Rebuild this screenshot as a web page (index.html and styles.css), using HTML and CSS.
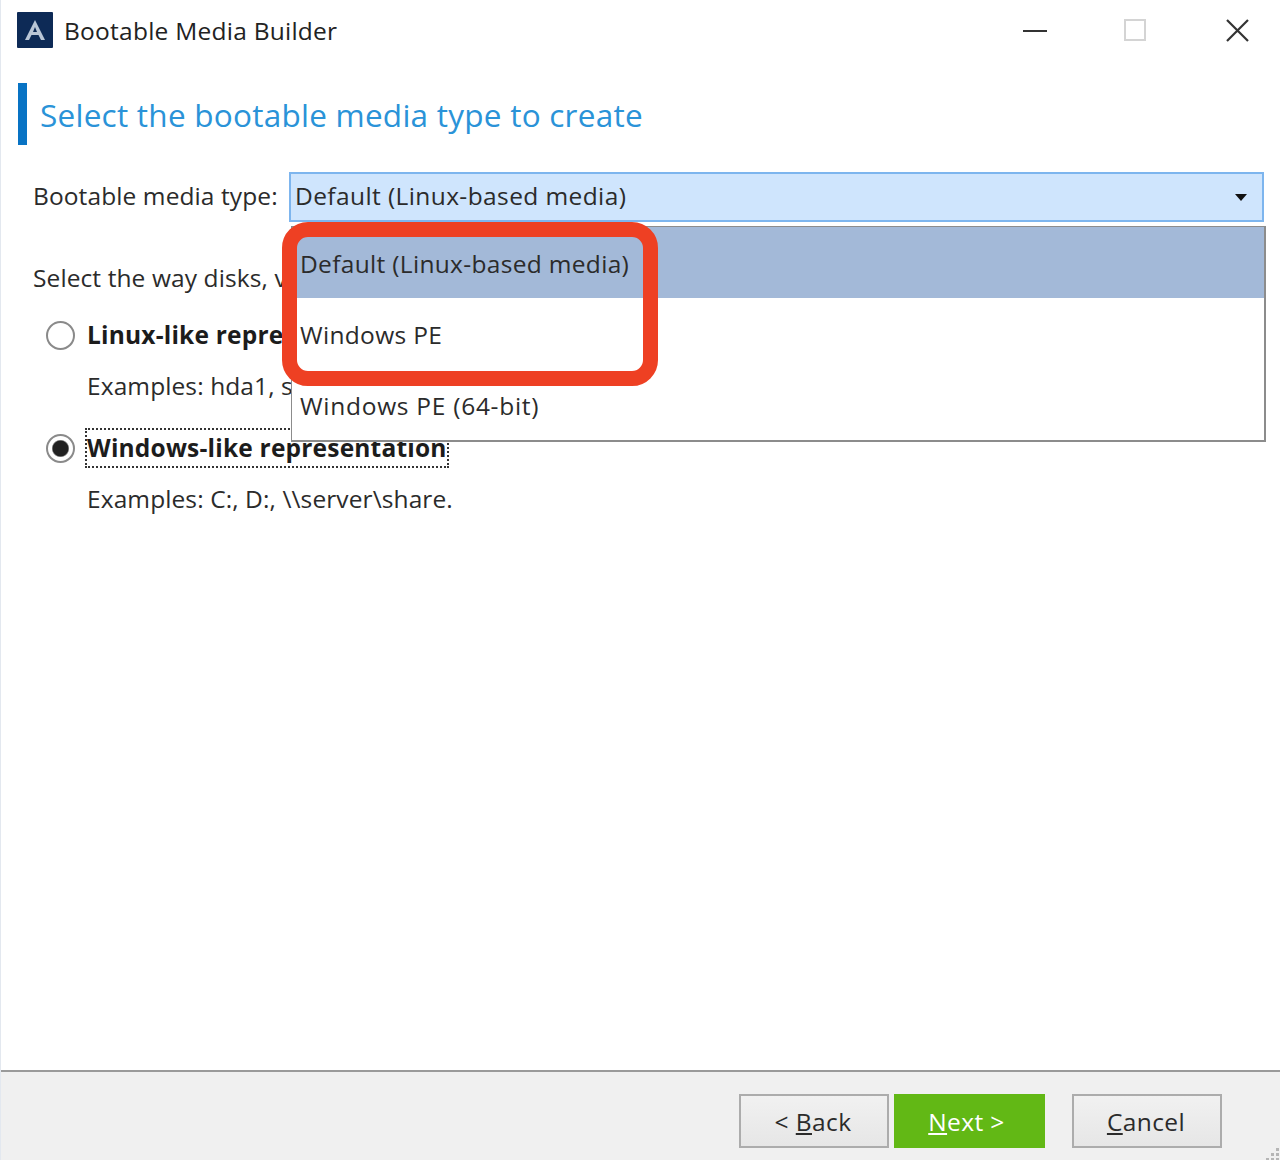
FILE: index.html
```html
<!DOCTYPE html>
<html lang="en">
<head>
<meta charset="utf-8">
<title>Bootable Media Builder</title>
<link rel="stylesheet" href="styles.css">
</head>
<body>
<div class="window">
  <header class="titlebar">
    <div class="title-left">
      <svg class="logo" width="36" height="36" viewBox="0 0 36 36"><rect width="36" height="36" rx="1" fill="#0d2a56"/><path d="M18 8 L8 28 H12 L14.5 23 H21.5 L24 28 H28 Z M16 20 L18 15 L20 20 Z" fill="#b9c6d6"/></svg>
      <span class="app-name">Bootable Media Builder</span>
    </div>
    <div class="win-controls">
      <svg class="ctl ctl-min" width="24" height="4" viewBox="0 0 24 4"><rect y="1" width="24" height="2" fill="#333"/></svg>
      <svg class="ctl ctl-max" width="22" height="22" viewBox="0 0 22 22"><rect x="1" y="1" width="20" height="20" fill="none" stroke="#d4d4d4" stroke-width="2"/></svg>
      <svg class="ctl ctl-close" width="25" height="25" viewBox="0 0 25 25"><path d="M2 2 L23 23 M23 2 L2 23" stroke="#333" stroke-width="2.2" fill="none"/></svg>
    </div>
  </header>

  <main class="content">
    <h1 class="heading">Select the bootable media type to create</h1>

    <div class="type-row">
      <span class="type-label">Bootable media type:</span>
      <div class="combo">
        <span class="combo-text">Default (Linux-based media)</span>
        <svg width="12" height="7" viewBox="0 0 12 7"><path d="M0 0 H12 L6 7 Z" fill="#111"/></svg>
      </div>
    </div>

    <p class="prompt">Select the way disks, volumes and network shares will be displayed:</p>

    <div class="option">
      <span class="radio"></span>
      <span class="option-label">Linux-like representation</span>
    </div>
    <p class="example">Examples: hda1, sdb2, md1.</p>

    <div class="option option-second">
      <span class="radio radio-on"></span>
      <span class="option-label focused">Windows-like representation</span>
    </div>
    <p class="example">Examples: C:, D:, \\server\share.</p>

    <ul class="dropdown">
      <li class="item item-selected">Default (Linux-based media)</li>
      <li class="item">Windows PE</li>
      <li class="item item-wide">Windows PE (64-bit)</li>
    </ul>
    <div class="callout"></div>
  </main>

  <footer class="footer">
    <button class="btn"><span>&lt; <u>B</u>ack</span></button>
    <button class="btn btn-next"><span><u>N</u>ext &gt;</span></button>
    <button class="btn btn-cancel"><span><u>C</u>ancel</span></button>
    <svg class="grip" width="18" height="14" viewBox="0 0 18 14"><g fill="#b5b5b5"><rect x="14" y="2" width="3" height="3"/><rect x="9" y="7" width="3" height="3"/><rect x="14" y="7" width="3" height="3"/><rect x="4" y="12" width="3" height="2"/><rect x="9" y="12" width="3" height="2"/><rect x="14" y="12" width="3" height="2"/></g></svg>
  </footer>
</div>
</body>
</html>
```

FILE: styles.css
```css
* { box-sizing: border-box; }
html, body { margin: 0; padding: 0; }
body {
  width: 1280px;
  height: 1160px;
  overflow: hidden;
  background: #fff;
  font-family: "Open Sans", "Noto Sans", sans-serif;
  color: #2b2b2b;
}
.window {
  width: 1280px;
  height: 1160px;
  display: flex;
  flex-direction: column;
  border-left: 1px solid #e3e8ef;
}
.titlebar {
  height: 62px;
  flex: none;
  display: flex;
  justify-content: space-between;
  align-items: center;
  padding: 0 30px 0 16px;
}
.title-left { display: flex; align-items: center; gap: 11px; }
.logo { display: block; margin-top: -2px; }
.app-name { font-size: 24.5px; letter-spacing: 0.25px; color: #222; padding-bottom: 2px; }
.win-controls { display: flex; align-items: center; }
.ctl { display: block; }
.ctl-max { margin-left: 77px; margin-bottom: 2px; }
.ctl-close { margin-left: 79px; margin-bottom: 2px; }

.content { flex: 1; position: relative; padding: 21px 0 0 17px; min-height: 0; }
.heading {
  margin: 0;
  height: 62px;
  border-left: 9px solid #0873c4;
  padding-left: 13px;
  font-size: 31.5px;
  font-weight: 400;
  line-height: 64px;
  letter-spacing: 0.25px;
  color: #2a93d8;
}
.type-row {
  display: flex;
  align-items: center;
  margin-top: 27px;
  height: 50px;
}
.type-label { font-size: 24.5px; letter-spacing: 0.1px; margin-left: 15px; width: 256px; flex: none; padding-bottom: 4px; }
.combo {
  width: 975px;
  height: 50px;
  flex: none;
  background: #cfe5fd;
  border: 2px solid #7db5ee;
  display: flex;
  justify-content: space-between;
  align-items: center;
  padding: 0 15px 0 4px;
  font-size: 24.5px;
  letter-spacing: 0.4px;
}
.combo-text { padding-bottom: 4px; }
.prompt {
  margin: 39px 0 0 15px;
  font-size: 24.5px;
  letter-spacing: 0.1px;
  line-height: 34px;
  white-space: nowrap;
}
.option { display: flex; align-items: center; margin: 23px 0 0 28px; height: 34px; gap: 11px; }
.option-second { margin-top: 28px; }
.radio {
  width: 29px;
  height: 29px;
  flex: none;
  border-radius: 50%;
  border: 2px solid #8a8a8a;
  background: #fff;
}
.radio-on { background: radial-gradient(circle, #222 0, #222 7.5px, #fff 9px); }
.option-label { font-size: 24.5px; font-weight: 700; letter-spacing: 0.2px; line-height: 40px; white-space: nowrap; color: #1c1c1c; margin-left: 1px; }
.focused { outline: 2px dotted #333; outline-offset: -2px; padding: 0 2px; margin-left: -1px; }
.example {
  margin: 17px 0 0 69px;
  font-size: 24.5px;
  letter-spacing: 0.1px;
  line-height: 34px;
  white-space: nowrap;
}

.dropdown {
  position: absolute;
  left: 290px;
  top: 164px;
  width: 975px;
  height: 216px;
  margin: 0;
  padding: 0;
  list-style: none;
  background: #fff;
  border-style: solid;
  border-color: #8c8c8c;
  border-width: 1px 2px 2px 1px;
}
.item {
  height: 71px;
  line-height: 73px;
  padding-left: 8px;
  font-size: 24.5px;
  letter-spacing: 0.32px;
}
.item-wide { letter-spacing: 0.72px; }
.item-selected { background: #a3b9d8; }
.callout {
  position: absolute;
  left: 281px;
  top: 160px;
  width: 376px;
  height: 164px;
  border: 15px solid #ee4023;
  border-radius: 26px;
}

.footer {
  height: 90px;
  flex: none;
  position: relative;
  background: #f0f0f0;
  border-top: 2px solid #9a9a9a;
  display: flex;
  align-items: flex-start;
  padding: 22px 0 0 738px;
}
.btn {
  width: 150px;
  height: 54px;
  background: linear-gradient(#f1f1f1, #e6e6e6);
  border: 2px solid #acacac;
  font-family: inherit;
  font-size: 24.5px;
  letter-spacing: 0.4px;
  color: #2b2b2b;
  padding: 0 2px 0 0;
}
.btn-next {
  margin-left: 5px;
  width: 151px;
  background: #62b815;
  border-color: #62b815;
  color: #fff;
  padding-right: 6px;
}
.btn-cancel { margin-left: 27px; }
.grip { position: absolute; right: 0; bottom: 0; }
```
